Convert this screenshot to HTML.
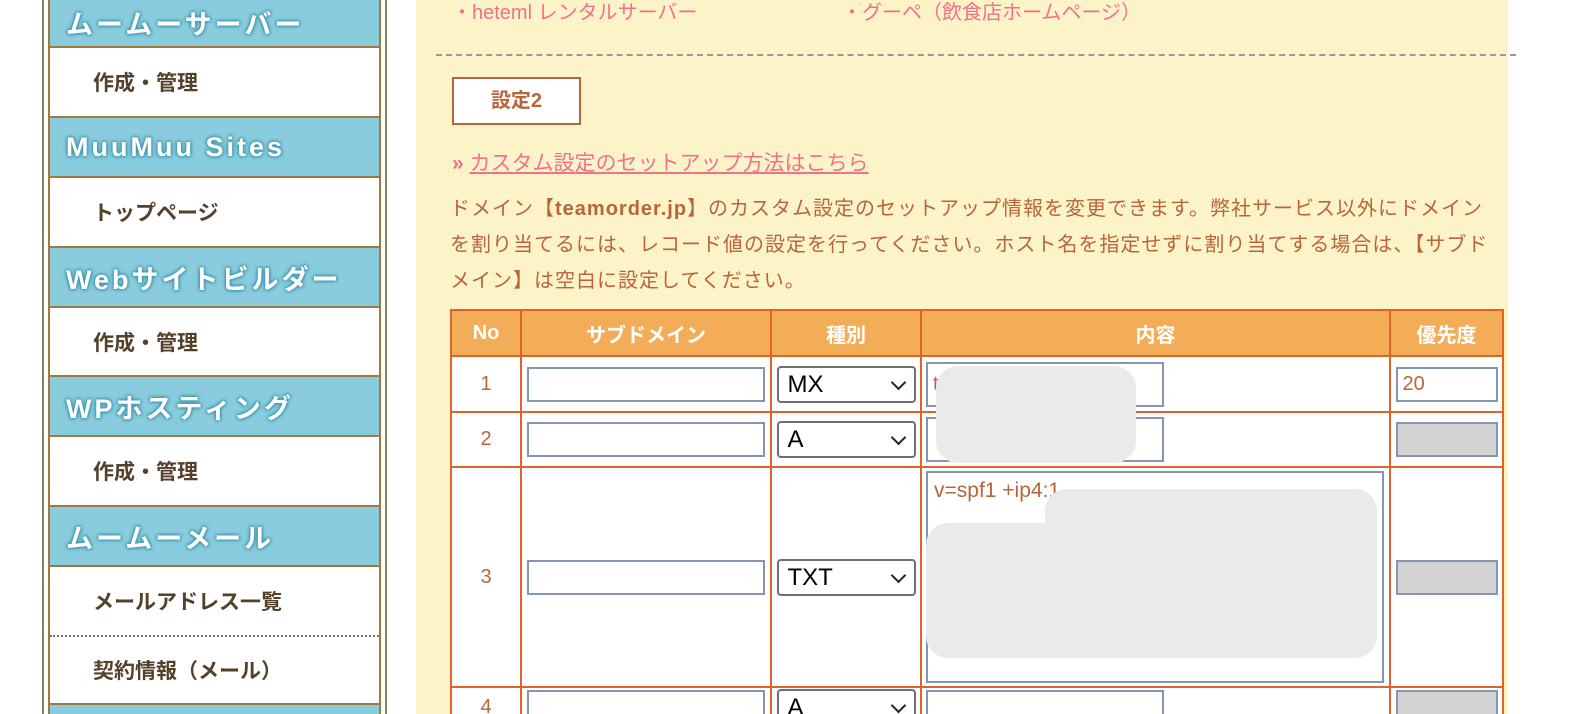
<!DOCTYPE html>
<html><head><meta charset="utf-8"><style>
*{margin:0;padding:0;box-sizing:border-box}
html,body{width:1584px;height:714px;overflow:hidden}
body{background:#fff;font-family:"Liberation Sans","Noto Sans CJK JP",sans-serif;position:relative}
.ol{position:absolute;top:0;height:714px;width:2px;background:#8a7d6a}
.side{position:absolute;left:48px;top:-2px;width:333px;height:716px;overflow:hidden;border-left:2px solid #a07840;border-right:2px solid #a07840}
.h{background:#88ccdd;border-bottom:2px solid #a07840;color:#fff;font-weight:bold;font-size:27px;padding-left:16px;letter-spacing:3px;text-shadow:0 0 3px #3f95ad,0 0 3px #3f95ad,0 0 4px #3f95ad;display:flex;align-items:center}
.w{background:#fff;border-bottom:2px solid #a07840;color:#55402a;font-weight:bold;font-size:21px;padding-left:43px;display:flex;align-items:center}
.main{position:absolute;left:416px;top:0;width:1092px;height:714px;background:#fcf4c8}
.a{position:absolute;color:#f0728a;font-size:20px;white-space:nowrap}
.t{position:absolute;left:450px;top:309px;border-collapse:collapse}
.t td,.t th{border:2px solid #e2622a;background:#fff;text-align:center;color:#b8653a;font-size:20px;font-weight:normal}
.t th{background:#f3ad58;color:#fff;font-weight:bold;height:46px;font-size:20px}
.in{border:2px solid #8496b4;height:35px;background:#fff;display:inline-block;vertical-align:middle}
.sel{border:2px solid #707070;border-radius:4px;height:37px;width:139px;display:inline-block;vertical-align:middle;text-align:left;color:#000;font-size:24px;padding-left:9px;line-height:33px;position:relative;background:#fff}
.sel:after{content:"";position:absolute;right:10px;top:9px;width:9px;height:9px;border-right:2px solid #222;border-bottom:2px solid #222;transform:rotate(45deg)}
.blur{position:absolute;background:#eaeaea;border-radius:22px}
</style></head><body>
<div class="ol" style="left:42px"></div><div class="ol" style="left:385px"></div>
<div class="side">
<div class="h" style="height:50px">ムームーサーバー</div>
<div class="w" style="height:70px">作成・管理</div>
<div class="h" style="height:60px">MuuMuu Sites</div>
<div class="w" style="height:70px">トップページ</div>
<div class="h" style="height:60px">Webサイトビルダー</div>
<div class="w" style="height:69px">作成・管理</div>
<div class="h" style="height:60px">WPホスティング</div>
<div class="w" style="height:70px">作成・管理</div>
<div class="h" style="height:60px">ムームーメール</div>
<div class="w" style="height:70px;border-bottom:2px dotted #8a7050">メールアドレス一覧</div>
<div class="w" style="height:68px">契約情報（メール）</div>
<div class="h" style="height:40px"></div>
</div>
<div class="main"></div>
<div class="a" style="left:452px;top:-4px">・heteml レンタルサーバー</div>
<div class="a" style="left:842px;top:-4px">・グーペ（飲食店ホームページ）</div>
<div style="position:absolute;left:436px;top:54px;width:1080px;border-top:2px dashed #999"></div>
<div style="position:absolute;left:452px;top:77px;width:129px;height:48px;border:2px solid #b8653a;background:#fff;color:#b8653a;font-weight:bold;font-size:20px;text-align:center;line-height:44px">設定2</div>
<div class="a" style="left:452px;top:147px;font-size:21px"><span style="font-weight:bold">»</span> <span style="text-decoration:underline">カスタム設定のセットアップ方法はこちら</span></div>
<div style="position:absolute;left:450px;top:191px;width:1045px;color:#b8653a;font-size:20px;line-height:36px;letter-spacing:1px">ドメイン【<b>teamorder.jp</b>】のカスタム設定のセットアップ情報を変更できます。弊社サービス以外にドメインを割り当てるには、レコード値の設定を行ってください。ホスト名を指定せずに割り当てする場合は、【サブドメイン】は空白に設定してください。</div>
<table class="t">
<tr><th style="width:70px">No</th><th style="width:250px">サブドメイン</th><th style="width:150px">種別</th><th style="width:469px">内容</th><th style="width:113px">優先度</th></tr>
<tr style="height:56px"><td>1</td><td><span class="in" style="width:238px"></span></td><td><span class="sel">MX</span></td><td style="text-align:left;padding-left:4px"><span class="in" style="width:238px;height:45px;text-align:left;padding-left:5px;line-height:40px">t</span></td><td><span class="in" style="width:102px;text-align:left;padding-left:5px;line-height:31px">20</span></td></tr>
<tr style="height:55px"><td>2</td><td><span class="in" style="width:238px"></span></td><td><span class="sel">A</span></td><td style="text-align:left;padding-left:4px"><span class="in" style="width:238px;height:45px"></span></td><td><span class="in" style="width:102px;background:#d3d3d3"></span></td></tr>
<tr style="height:220px"><td>3</td><td><span class="in" style="width:238px"></span></td><td><span class="sel">TXT</span></td><td style="text-align:left;padding-left:4px"><span class="in" style="width:458px;height:212px;text-align:left;padding:6px;vertical-align:middle;font-size:21px">v=spf1 +ip4:1</span></td><td><span class="in" style="width:102px;background:#d3d3d3"></span></td></tr>
<tr style="height:40px"><td>4</td><td><span class="in" style="width:238px"></span></td><td><span class="sel">A</span></td><td style="text-align:left;padding-left:4px"><span class="in" style="width:238px"></span></td><td><span class="in" style="width:102px;background:#d3d3d3"></span></td></tr>
</table>
<div class="blur" style="left:936px;top:366px;width:200px;height:97px"></div>
<div class="blur" style="left:1045px;top:489px;width:332px;height:100px"></div>
<div class="blur" style="left:926px;top:523px;width:451px;height:135px"></div>
</body></html>
